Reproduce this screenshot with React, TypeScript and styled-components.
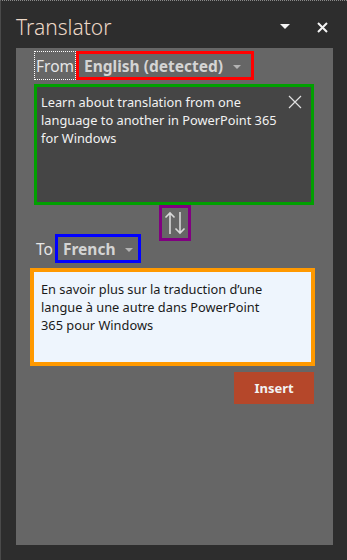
import styled, { createGlobalStyle } from "styled-components";

const GlobalStyle = createGlobalStyle`
  html, body {
    margin: 0;
    padding: 0;
    background: #2d2d2d;
  }
  * {
    box-sizing: border-box;
  }
`;

const Pane = styled.div`
  width: 347px;
  height: 560px;
  background: #2d2d2d;
  border-top: 1px dotted #8a8a8a;
  border-left: 1px solid #4a4a4a;
  font-family: "Noto Sans", "Open Sans", sans-serif;
  display: flex;
  flex-direction: column;
`;

const Header = styled.div`
  height: 47px;
  display: flex;
  align-items: flex-start;
  padding: 12px 0 0 15px;
`;

const Title = styled.h1`
  margin: 0;
  flex: 1;
  font-size: 21px;
  font-weight: 300;
  color: #ecd7c6;
`;

const HeaderButton = styled.button<{ $gap: number }>`
  width: 24px;
  height: 24px;
  margin-top: 2px;
  margin-right: ${(p) => p.$gap}px;
  padding: 0;
  border: none;
  background: none;
  display: flex;
  align-items: center;
  justify-content: center;
`;

const Panel = styled.div`
  margin: 0 14px 0 15px;
  height: 497px;
  background: #666666;
  padding: 3px 19px 0 18px;
  display: flex;
  flex-direction: column;
`;

const LangRow = styled.div<{ $offset?: number }>`
  display: flex;
  height: 29px;
  margin-top: ${(p) => p.$offset ?? 0}px;
`;

const Label = styled.span<{ $focus?: boolean }>`
  display: flex;
  align-items: center;
  font-size: 15.5px;
  color: #e6e6e6;
  padding: 0 1px;
  border: 1px dotted ${(p) => (p.$focus ? "#ffffff" : "transparent")};
`;

const Picker = styled.div<{ $color: string; $w: number }>`
  width: ${(p) => p.$w}px;
  display: flex;
  align-items: center;
  gap: 10px;
  padding-left: 5px;
  border: 3px solid ${(p) => p.$color};
  font-size: 15.5px;
  font-weight: 700;
  color: #d4d4d4;
`;

const Caret = styled.span`
  width: 0;
  height: 0;
  margin-top: 2px;
  border-left: 4px solid transparent;
  border-right: 4px solid transparent;
  border-top: 4px solid #b4b4b4;
`;

const SourceBox = styled.div`
  margin-top: 4px;
  height: 121px;
  border: 3px solid #00a000;
  background: #454545;
  display: flex;
  padding: 6px 8px 0 4px;
`;

const BoxText = styled.p<{ $dark?: boolean }>`
  margin: 0;
  flex: 1;
  font-size: 12.8px;
  line-height: 18px;
  color: ${(p) => (p.$dark ? "#1a1a1a" : "#f2f2f2")};
`;

const ClearButton = styled.button`
  width: 16px;
  height: 16px;
  padding: 0;
  margin-top: 2px;
  border: none;
  background: none;
`;

const SwapButton = styled.button`
  align-self: center;
  width: 32px;
  height: 36px;
  padding: 0;
  margin-left: 1px;
  border: 3px solid #800080;
  background: transparent;
  display: flex;
  align-items: center;
  justify-content: center;
`;

const TargetBox = styled.div`
  margin: 5px -1px 0 -4px;
  height: 98px;
  border: 4px solid #ff9900;
  background: #eef5fd;
  padding: 8px 7px 0 7px;
`;

const InsertButton = styled.button`
  align-self: flex-end;
  margin-top: 6px;
  width: 80px;
  height: 32px;
  border: none;
  background: #b5472a;
  color: #f2f2f2;
  font-family: "Noto Sans", "Open Sans", sans-serif;
  font-size: 13px;
  font-weight: 700;
`;

export default function App() {
  return (
    <>
      <GlobalStyle />
      <Pane>
        <Header>
          <Title>Translator</Title>
          <HeaderButton $gap={13} aria-label="Options">
            <svg width="10" height="6" viewBox="0 0 10 6">
              <path d="M0 0 L10 0 L5 5 Z" fill="#f4f4f4" />
            </svg>
          </HeaderButton>
          <HeaderButton $gap={13} aria-label="Close">
            <svg width="11" height="11" viewBox="0 0 11 11">
              <path d="M1 1 L10 10 M10 1 L1 10" stroke="#f4f4f4" strokeWidth="2" />
            </svg>
          </HeaderButton>
        </Header>
        <Panel>
          <LangRow>
            <Label $focus>From</Label>
            <Picker $color="#ff0000" $w={178}>
              English (detected)
              <Caret />
            </Picker>
          </LangRow>
          <SourceBox>
            <BoxText>
              Learn about translation from one
              <br />
              language to another in PowerPoint 365
              <br />
              for Windows
            </BoxText>
            <ClearButton aria-label="Clear">
              <svg width="14" height="14" viewBox="0 0 14 14">
                <path d="M1 1 L13 13 M13 1 L1 13" stroke="#e0e0e0" strokeWidth="1.2" />
              </svg>
            </ClearButton>
          </SourceBox>
          <SwapButton aria-label="Swap languages">
            <svg width="22" height="26" viewBox="0 0 22 26">
              <path
                d="M6 24 V3 M1.5 7.5 L6 3 L10.5 7.5"
                stroke="#d8d8d8"
                strokeWidth="1.6"
                fill="none"
              />
              <path
                d="M16 2 V23 M11.5 18.5 L16 23 L20.5 18.5"
                stroke="#d8d8d8"
                strokeWidth="1.6"
                fill="none"
              />
            </svg>
          </SwapButton>
          <LangRow $offset={-7}>
            <Label>To</Label>
            <Picker $color="#0000ff" $w={86}>
              French
              <Caret />
            </Picker>
          </LangRow>
          <TargetBox>
            <BoxText $dark>
              En savoir plus sur la traduction d’une
              <br />
              langue à une autre dans PowerPoint
              <br />
              365 pour Windows
            </BoxText>
          </TargetBox>
          <InsertButton>Insert</InsertButton>
        </Panel>
      </Pane>
    </>
  );
}
